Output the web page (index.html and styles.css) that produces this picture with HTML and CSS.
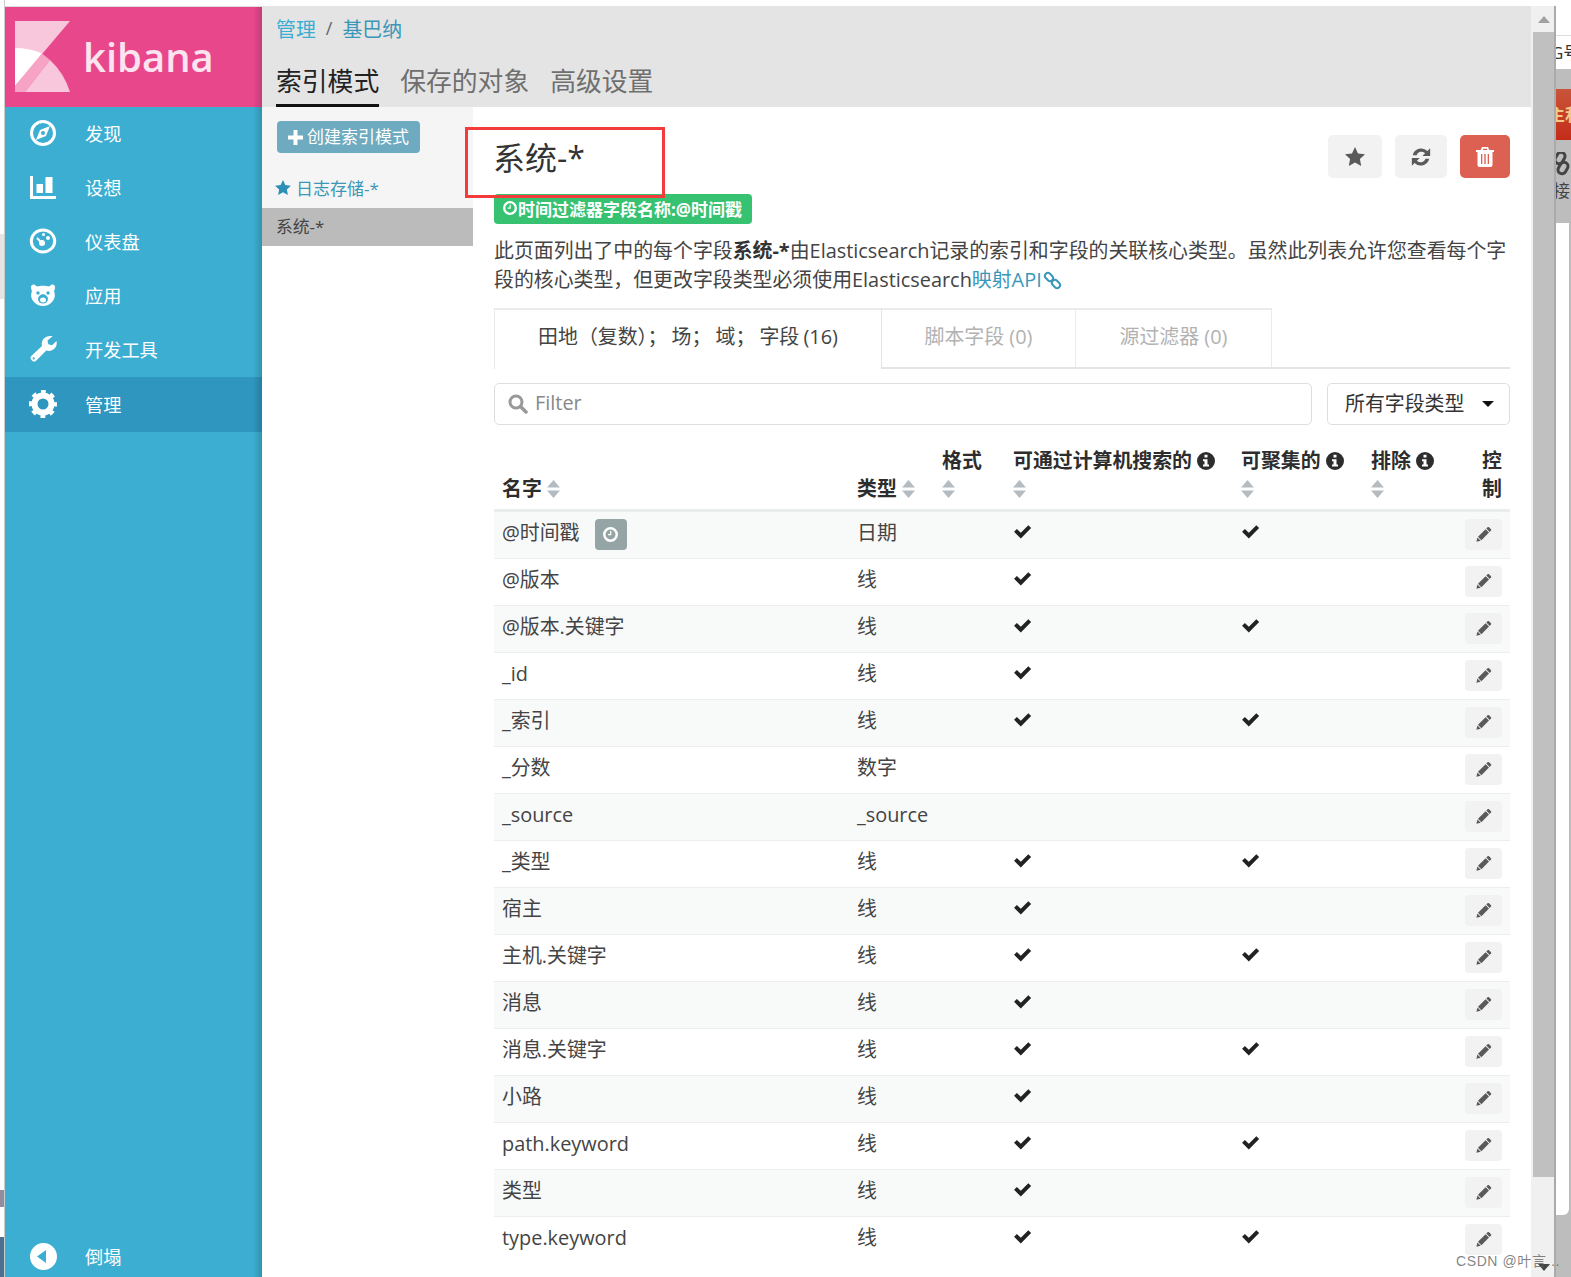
FILE: index.html
```html
<!DOCTYPE html>
<html lang="zh-CN">
<head>
<meta charset="utf-8">
<title>Kibana 管理</title>
<link rel="stylesheet" href="styles.css">
</head>
<body>
<svg class="defs" aria-hidden="true">
  <defs>
    <symbol id="i-check" viewBox="0 0 20 16"><path d="M1 8.2l3-3 4.2 4.2L16.2 1.2l3 3L8.2 15.4z"/></symbol>
    <symbol id="i-pencil" viewBox="0 0 16 16"><path d="M11.6 1.2c.4-.4 1-.4 1.4 0l2 2c.4.4.4 1 0 1.4l-1.3 1.3-3.4-3.4z"/><path d="M9.6 3.2l3.4 3.4-7.6 7.6-3.4-3.4z"/><path d="M1.4 11.5l3.3 3.3L.4 15.8z"/></symbol>
    <symbol id="i-sort" viewBox="0 0 13 18"><path d="M6.5 0L13 7.6H0z"/><path d="M0 10.4h13L6.5 18z"/></symbol>
    <symbol id="i-info" viewBox="0 0 18 18"><path fill-rule="evenodd" d="M9 0a9 9 0 1 1 0 18A9 9 0 0 1 9 0zM7.5 2.8v2.7h3V2.8zM6 7.2v2h1.5v3.2H6v2.1h6v-2.1h-1.5V7.2z"/></symbol>
    <symbol id="i-star" viewBox="0 0 20 19"><path d="M10 0l3 6.4 7 .9-5.1 4.8 1.3 6.9L10 15.6 3.800 19l1.300-6.900L0 7.300l7-.9z"/></symbol>
    <symbol id="i-clock" viewBox="0 0 18 18"><path fill-rule="evenodd" d="M9 0a9 9 0 1 1 0 18A9 9 0 0 1 9 0zm0 3a6 6 0 1 0 0 12A6 6 0 0 0 9 3zm1 1.800v5.200H6V8.500h2.500V4.800z"/></symbol>
  </defs>
</svg>
<div class="page">
  <div class="edge-left">
    <div class="el-a"></div><div class="el-b"></div><div class="el-a2"></div><div class="el-c"></div><div class="el-d"></div><div class="el-e"></div><div class="el-f"></div>
  </div>
  <div class="app">
    <aside class="sidebar">
      <div class="brand">
        <svg class="logo" viewBox="0 0 55 71">
          <path fill="#f9c7dc" d="M0 0H55L0 65Z"/>
          <path fill="#fff" d="M0 27Q15 27 27 32.500L0 65Z"/>
          <path fill="#f6a3c5" d="M0 65L27 32.500L35 39L10 71H0Z"/>
          <path fill="#f9c7dc" d="M10 71L35 39Q49 52 55 71Z"/>
        </svg>
        <span class="brand-name">kibana</span>
      </div>
      <nav class="nav">
        <a class="nav-item"><span class="nav-icon"><svg width="28" height="28" viewBox="0 0 28 28"><circle cx="14" cy="14" r="11.500" fill="none" stroke="#fff" stroke-width="3"/><path fill="#fff" fill-rule="evenodd" d="M21 7L17 17L7 21L11 11ZM14 12a2 2 0 1 0 0 4a2 2 0 0 0 0-4Z"/></svg></span>发现</a>
        <a class="nav-item"><span class="nav-icon"><svg width="26" height="23" viewBox="0 0 26 23"><path fill="#fff" d="M0 0h3v20h23v3H0z"/><rect fill="#fff" x="6.500" y="8" width="6.500" height="9"/><rect fill="#fff" x="15.500" y="1" width="7" height="16"/></svg></span>设想</a>
        <a class="nav-item"><span class="nav-icon"><svg width="28" height="26" viewBox="0 0 28 26"><ellipse cx="14" cy="13" rx="11.700" ry="11" fill="none" stroke="#fff" stroke-width="3"/><circle cx="19" cy="10" r="2" fill="#fff"/><circle cx="14.500" cy="6.500" r="1.500" fill="#fff"/><circle cx="13" cy="15" r="3" fill="#fff"/><path d="M8 10l4 4" stroke="#fff" stroke-width="2"/></svg></span>仪表盘</a>
        <a class="nav-item"><span class="nav-icon"><svg width="26" height="22" viewBox="0 0 26 22"><path fill="#fff" d="M1 3C1 1 3 0 5 1L7 2.500C10 1.500 16 1.500 19 2.500L21 1C23 0 25 1 25 3C25 5 24.500 6 24 7C25.500 11 25 15 22 18C19 21 16 22 13 22C10 22 7 21 4 18C1 15 .5 11 2 7C1.500 6 1 5 1 3Z"/><circle cx="8" cy="9" r="1.700" fill="#3caed2"/><circle cx="18" cy="9" r="1.700" fill="#3caed2"/><ellipse cx="13" cy="15" rx="5" ry="4.500" fill="#3caed2"/><ellipse cx="13" cy="16" rx="3" ry="2.500" fill="#fff"/><ellipse cx="13" cy="11.500" rx="2" ry="1.200" fill="#3caed2"/></svg></span>应用</a>
        <a class="nav-item"><span class="nav-icon"><svg width="28" height="28" viewBox="0 0 28 28"><path fill="#fff" fill-rule="evenodd" d="M2.500 25C1 23.500 1.300 22 2.500 20.800L13 11C12 7 14 3.500 17.500 1.800C19.500 .9 22 .7 23.500 1.300L18.500 5.500L19.300 9.300L23 10.300L27.500 6C28 8 27.800 10.500 26.400 12.500C24 15.500 20.800 16.500 17.300 15.500L6.800 26C5.500 27.200 3.900 26.500 2.500 25ZM4.700 22.300a1.100 1.100 0 1 0 0 2.200a1.100 1.100 0 0 0 0-2.200Z"/></svg></span>开发工具</a>
        <a class="nav-item is-active"><span class="nav-icon"><svg width="28" height="28" viewBox="0 0 28 28"><circle cx="14" cy="14" r="8.500" fill="none" stroke="#fff" stroke-width="6"/><circle cx="14" cy="14" r="11.500" fill="none" stroke="#fff" stroke-width="5" stroke-dasharray="4.500 4.531" stroke-dashoffset="2.250"/></svg></span>管理</a>
      </nav>
      <a class="nav-item collapse"><span class="nav-icon"><svg width="27" height="27" viewBox="0 0 27 27"><path fill="#fff" fill-rule="evenodd" d="M13.500 0a13.500 13.500 0 1 1 0 27a13.500 13.500 0 0 1 0-27ZM16 7L7 13.500L16 20Z"/></svg></span>倒塌</a>
    </aside>
    <main class="main">
      <header class="topbar">
        <div class="crumbs"><a class="crumb">管理</a><span class="crumb-sep">/</span><a class="crumb crumb-dark">基巴纳</a></div>
        <div class="top-tabs"><a class="top-tab is-current">索引模式</a><a class="top-tab">保存的对象</a><a class="top-tab">高级设置</a></div>
      </header>
      <div class="content">
        <aside class="panel">
          <div class="panel-top">
            <button class="create-btn"><svg class="plus" width="15" height="15" viewBox="0 0 15 15"><path fill="#fff" d="M5.500 0h4v5.500H15v4H9.500V15h-4V9.500H0v-4h5.500z"/></svg><span class="create-label">创建索引模式</span></button>
            <a class="pattern pattern-fav"><svg class="pattern-star" width="16" height="15"><use href="#i-star"/></svg>日志存储-*</a>
          </div>
          <a class="pattern pattern-current">系统-*</a>
        </aside>
        <section class="detail">
          <div class="detail-head">
            <h1 class="title">系统-*</h1>
            <div class="actions">
              <button class="act act-star"><svg width="20" height="19" class="ico-dark"><use href="#i-star"/></svg></button>
              <button class="act act-reload"><svg width="22" height="22" viewBox="0 0 24 24" class="ico-dark"><path d="M21 14a9.500 9.500 0 0 1-16 4.500L2 21.500V13h8.500L7.500 16a5.500 5.500 0 0 0 9.300-2z"/><path d="M3 10a9.500 9.500 0 0 1 16-4.500L22 2.500V11h-8.500l3-3a5.500 5.500 0 0 0-9.300 2z"/></svg></button>
              <button class="act act-trash"><svg width="18" height="20" viewBox="0 0 18 20"><path fill="#fff" fill-rule="evenodd" d="M6 0h6l1.300 3H18v2h-1.500v13a2 2 0 0 1-2 2h-11a2 2 0 0 1-2-2V5H0V3h4.700zM7.200 1.700L6.700 3h4.600l-.5-1.300zM5 7v10h1.300V7zm3.300 0v10h1.400V7zM11.700 7v10H13V7z"/></svg></button>
            </div>
          </div>
          <div class="time-badge"><svg width="14" height="14" class="ico-white"><use href="#i-clock"/></svg>时间过滤器字段名称:@时间戳</div>
          <p class="intro">此页面列出了中的每个字段<b>系统-*</b>由Elasticsearch记录的索引和字段的关联核心类型。虽然此列表允许您查看每个字段的核心类型，但更改字段类型必须使用Elasticsearch<a class="doc-link">映射API<svg class="chain" width="19" height="19" viewBox="0 0 19 19"><g fill="none" stroke="#3a97b8" stroke-width="2"><rect x="1.500" y="3" width="9" height="6" rx="3" transform="rotate(45 6 6)"/><rect x="8.500" y="10" width="9" height="6" rx="3" transform="rotate(45 13 13)"/></g></svg></a></p>
          <div class="tabs">
            <a class="tab tab-fields">田地（复数）； 场； 域； 字段 (16)</a>
            <a class="tab tab-script">脚本字段 (0)</a>
            <a class="tab tab-source">源过滤器 (0)</a>
          </div>
          <div class="filters">
            <label class="filter"><svg width="20" height="20" viewBox="0 0 20 20"><circle cx="8" cy="8" r="6" fill="none" stroke="#999" stroke-width="3"/><path d="M12.500 12.500L18 18" stroke="#999" stroke-width="3.500" stroke-linecap="round"/></svg><span class="filter-text">Filter</span></label>
            <div class="type-select"><span class="type-label">所有字段类型</span><span class="caret"></span></div>
          </div>
          <table class="fields">
            <colgroup><col class="c-name"><col class="c-type"><col class="c-format"><col class="c-search"><col class="c-agg"><col class="c-excl"><col class="c-ctrl"></colgroup>
            <thead>
              <tr>
                <th>名字 <svg class="sort" width="13" height="18"><use href="#i-sort"/></svg></th>
                <th>类型 <svg class="sort" width="13" height="18"><use href="#i-sort"/></svg></th>
                <th>格式 <svg class="sort" width="13" height="18"><use href="#i-sort"/></svg></th>
                <th>可通过计算机搜索的 <svg class="info" width="18" height="18"><use href="#i-info"/></svg> <svg class="sort" width="13" height="18"><use href="#i-sort"/></svg></th>
                <th>可聚集的 <svg class="info" width="18" height="18"><use href="#i-info"/></svg> <svg class="sort" width="13" height="18"><use href="#i-sort"/></svg></th>
                <th>排除 <svg class="info" width="18" height="18"><use href="#i-info"/></svg> <svg class="sort" width="13" height="18"><use href="#i-sort"/></svg></th>
                <th class="th-ctrl">控制</th>
              </tr>
            </thead>
            <tbody>
              <tr><td>@时间戳<span class="time-tag"><svg width="15" height="15" class="ico-white"><use href="#i-clock"/></svg></span></td><td>日期</td><td></td><td><svg class="ok"><use href="#i-check"/></svg></td><td><svg class="ok"><use href="#i-check"/></svg></td><td></td><td class="td-ctrl"><button class="edit"><svg width="16" height="16" class="ico-dark"><use href="#i-pencil"/></svg></button></td></tr>
              <tr><td>@版本</td><td>线</td><td></td><td><svg class="ok"><use href="#i-check"/></svg></td><td></td><td></td><td class="td-ctrl"><button class="edit"><svg width="16" height="16" class="ico-dark"><use href="#i-pencil"/></svg></button></td></tr>
              <tr><td>@版本.关键字</td><td>线</td><td></td><td><svg class="ok"><use href="#i-check"/></svg></td><td><svg class="ok"><use href="#i-check"/></svg></td><td></td><td class="td-ctrl"><button class="edit"><svg width="16" height="16" class="ico-dark"><use href="#i-pencil"/></svg></button></td></tr>
              <tr><td>_id</td><td>线</td><td></td><td><svg class="ok"><use href="#i-check"/></svg></td><td></td><td></td><td class="td-ctrl"><button class="edit"><svg width="16" height="16" class="ico-dark"><use href="#i-pencil"/></svg></button></td></tr>
              <tr><td>_索引</td><td>线</td><td></td><td><svg class="ok"><use href="#i-check"/></svg></td><td><svg class="ok"><use href="#i-check"/></svg></td><td></td><td class="td-ctrl"><button class="edit"><svg width="16" height="16" class="ico-dark"><use href="#i-pencil"/></svg></button></td></tr>
              <tr><td>_分数</td><td>数字</td><td></td><td></td><td></td><td></td><td class="td-ctrl"><button class="edit"><svg width="16" height="16" class="ico-dark"><use href="#i-pencil"/></svg></button></td></tr>
              <tr><td>_source</td><td>_source</td><td></td><td></td><td></td><td></td><td class="td-ctrl"><button class="edit"><svg width="16" height="16" class="ico-dark"><use href="#i-pencil"/></svg></button></td></tr>
              <tr><td>_类型</td><td>线</td><td></td><td><svg class="ok"><use href="#i-check"/></svg></td><td><svg class="ok"><use href="#i-check"/></svg></td><td></td><td class="td-ctrl"><button class="edit"><svg width="16" height="16" class="ico-dark"><use href="#i-pencil"/></svg></button></td></tr>
              <tr><td>宿主</td><td>线</td><td></td><td><svg class="ok"><use href="#i-check"/></svg></td><td></td><td></td><td class="td-ctrl"><button class="edit"><svg width="16" height="16" class="ico-dark"><use href="#i-pencil"/></svg></button></td></tr>
              <tr><td>主机.关键字</td><td>线</td><td></td><td><svg class="ok"><use href="#i-check"/></svg></td><td><svg class="ok"><use href="#i-check"/></svg></td><td></td><td class="td-ctrl"><button class="edit"><svg width="16" height="16" class="ico-dark"><use href="#i-pencil"/></svg></button></td></tr>
              <tr><td>消息</td><td>线</td><td></td><td><svg class="ok"><use href="#i-check"/></svg></td><td></td><td></td><td class="td-ctrl"><button class="edit"><svg width="16" height="16" class="ico-dark"><use href="#i-pencil"/></svg></button></td></tr>
              <tr><td>消息.关键字</td><td>线</td><td></td><td><svg class="ok"><use href="#i-check"/></svg></td><td><svg class="ok"><use href="#i-check"/></svg></td><td></td><td class="td-ctrl"><button class="edit"><svg width="16" height="16" class="ico-dark"><use href="#i-pencil"/></svg></button></td></tr>
              <tr><td>小路</td><td>线</td><td></td><td><svg class="ok"><use href="#i-check"/></svg></td><td></td><td></td><td class="td-ctrl"><button class="edit"><svg width="16" height="16" class="ico-dark"><use href="#i-pencil"/></svg></button></td></tr>
              <tr><td>path.keyword</td><td>线</td><td></td><td><svg class="ok"><use href="#i-check"/></svg></td><td><svg class="ok"><use href="#i-check"/></svg></td><td></td><td class="td-ctrl"><button class="edit"><svg width="16" height="16" class="ico-dark"><use href="#i-pencil"/></svg></button></td></tr>
              <tr><td>类型</td><td>线</td><td></td><td><svg class="ok"><use href="#i-check"/></svg></td><td></td><td></td><td class="td-ctrl"><button class="edit"><svg width="16" height="16" class="ico-dark"><use href="#i-pencil"/></svg></button></td></tr>
              <tr><td>type.keyword</td><td>线</td><td></td><td><svg class="ok"><use href="#i-check"/></svg></td><td><svg class="ok"><use href="#i-check"/></svg></td><td></td><td class="td-ctrl"><button class="edit"><svg width="16" height="16" class="ico-dark"><use href="#i-pencil"/></svg></button></td></tr>
            </tbody>
          </table>
        </section>
      </div>
    </main>
  </div>
  <div class="scrollbar">
    <span class="arrow-up"></span>
    <div class="thumb"></div>
    <span class="arrow-down"></span>
  </div>
  <div class="edge-right">
    <div class="er-top"></div>
    <div class="er-text">G号</div>
    <div class="er-gap"></div>
    <div class="er-red">主利</div>
    <div class="er-gray"><svg width="18" height="24" viewBox="0 0 18 24"><g fill="none" stroke="#444" stroke-width="3"><rect x="1" y="2" width="12" height="8" rx="4" transform="rotate(-60 7 6)"/><rect x="4" y="12" width="12" height="8" rx="4" transform="rotate(-60 10 16)"/></g></svg><span>接</span></div>
    <div class="er-panel"></div>
    <div class="er-bottom"></div>
  </div>
  <div class="red-box"></div>
  <div class="watermark">CSDN @叶言...</div>
</div>
</body>
</html>
```
FILE: styles.css
```css
* { box-sizing: border-box; }
html, body { margin: 0; padding: 0; background: #fff; }
body {
  font-family: "Open Sans", "Noto Sans CJK SC", sans-serif;
  font-size: 19.9px;
  color: #444;
  width: 1571px;
  height: 1277px;
  overflow: hidden;
}
a { text-decoration: none; }
button { font: inherit; border: 0; padding: 0; cursor: pointer; }
.defs { position: absolute; width: 0; height: 0; }
.page { position: relative; display: flex; width: 1571px; height: 1277px; overflow: hidden; }

/* edges of neighbouring windows */
.edge-left { width: 5px; flex: none; display: flex; flex-direction: column; border-right: 1px solid #ccc; background: #fff; }
.el-a { height: 234px; flex: none; }
.el-b { height: 65px; flex: none; background: #e4e4e4; }
.el-a2 { height: 640px; flex: none; }
.el-c { height: 251px; flex: none; }
.el-d { height: 17px; flex: none; background: #8e8ea0; }
.el-e { height: 30px; flex: none; background: #fff; }
.el-f { flex: 1; background: #4a6f8f; }

.app { width: 1526px; flex: none; display: flex; margin-top: 6px; border-top: 1px solid #ddd; height: 1271px; }

/* sidebar */
.sidebar { position: relative; width: 257px; flex: none; background: #3caed2; display: flex; flex-direction: column; }
.sidebar::after { content: ""; position: absolute; top: 0; right: 0; bottom: 0; width: 9px; background: linear-gradient(to right, rgba(0,0,0,0), rgba(0,0,0,.16)); pointer-events: none; }
.brand { height: 100px; flex: none; background: #e8488b; display: flex; align-items: flex-start; padding: 14px 0 0 10px; }
.logo { width: 55px; height: 71px; flex: none; }
.brand-name { margin: 7px 0 0 13px; font-family: "Open Sans", sans-serif; font-size: 40px; font-weight: 600; line-height: 58px; color: #fbe3ef; }
.nav { flex: 1; display: flex; flex-direction: column; }
.nav-item { height: 54px; flex: none; display: flex; align-items: center; color: #fff; font-size: 18.2px; padding-bottom: 2px; }
.nav-item.is-active { background: #2e96bf; height: 55px; }
.nav-icon { width: 80px; flex: none; display: flex; justify-content: center; padding-right: 4px; }
.collapse { height: 40px; padding-bottom: 2px; }

/* main */
.main { flex: 1; min-width: 0; display: flex; flex-direction: column; }
.topbar { height: 101px; flex: none; background: #e4e4e4; padding: 6px 0 0 14px; margin-top: -1px; }
.crumbs { display: flex; align-items: center; height: 32px; }
.crumb { color: #3caed2; }
.crumb-dark { color: #3a97b8; }
.crumb-sep { margin: 0 10px; color: #666; font-size: 18px; }
.top-tabs { display: flex; gap: 21px; margin-top: 9px; height: 54px; }
.top-tab { font-size: 25.8px; line-height: 52px; padding-top: 2px; color: #6f6f6f; height: 54px; }
.top-tab.is-current { color: #222; border-bottom: 3px solid #111; }

.content { flex: 1; display: flex; min-height: 0; }
.panel { width: 211px; flex: none; }
.panel-top { height: 101px; background: #f5f5f5; padding: 15px 0 0 15px; }
.create-btn { display: flex; align-items: center; gap: 4px; width: 143px; height: 32px; padding-left: 11px; border-radius: 4px; background: #6eabc0; color: #fff; font-size: 17px; white-space: nowrap; margin-top: -1px; }
.create-label { margin-top: -3px; }
.pattern { display: flex; align-items: center; font-size: 16.8px; }
.pattern-fav { color: #3a97b8; margin-top: 21px; height: 26px; margin-left: -2px; font-size: 17px; }
.pattern-star { fill: #2d8fb5; margin-right: 5px; }
.pattern-current { height: 38px; background: #bbb; color: #444; padding: 0 0 2px 14px; }

.detail { flex: 1; min-width: 0; padding: 0 21px; }
.detail-head { height: 87px; padding-top: 28px; display: flex; justify-content: space-between; align-items: flex-start; }
.title { margin: 0 0 0 -1px; font-size: 32px; font-weight: 400; line-height: 46px; color: #333; }
.actions { display: flex; gap: 13px; }
.act { width: 54px; height: 43px; border-radius: 5px; background: #f2f2f2; display: flex; align-items: center; justify-content: center; }
.act-star { margin-left: -1px; }
.act-reload { width: 52px; }
.act-trash { width: 50px; background: #dd6153; }
.ico-dark { fill: #5a5a5a; }
.ico-white { fill: #fff; }
.time-badge { display: flex; align-items: center; gap: 1px; height: 30px; width: 258px; padding: 0 0 2px 9px; border-radius: 4px; background: #36c270; color: #fff; font-size: 17px; font-weight: 700; white-space: nowrap; }
.intro { margin: 12px 0 0; line-height: 29.4px; }
.intro b { color: #333; }
.doc-link { color: #3a97b8; }
.chain { vertical-align: -3px; margin-left: 1px; }

.tabs { display: flex; margin-top: 13px; height: 61px; border-bottom: 2px solid #e4e4e4; }
.tab { height: 59px; display: flex; align-items: center; justify-content: center; padding-bottom: 5px; border: 2px solid #ebebeb; border-left-width: 1px; border-bottom: 0; color: #b2b2b2; white-space: nowrap; }
.tab-fields { width: 388px; height: 61px; padding-bottom: 7px; background: #fff; color: #444; border-right: 1px solid #e4e4e4; word-spacing: -1px; }
.tab-script { width: 194px; border-left: 0; border-right-width: 1px; }
.tab-source { width: 196px; border-left: 0; border-right-width: 1px; }

.filters { display: flex; gap: 15px; margin-top: 14px; }
.filter { flex: 1; height: 42px; display: flex; align-items: center; gap: 7px; padding-left: 13px; border: 1px solid #dcdfe0; border-radius: 5px; }
.filter-text { color: #888; margin-top: -2px; }
.type-select { width: 183px; height: 42px; display: flex; align-items: center; justify-content: space-between; padding: 0 15px 0 17px; border: 1px solid #dcdfe0; border-radius: 5px; color: #333; }
.type-label { margin-top: -3px; }
.caret { width: 0; height: 0; border-left: 6px solid transparent; border-right: 6px solid transparent; border-top: 6px solid #111; }

.fields { width: 1016px; table-layout: fixed; border-collapse: separate; border-spacing: 0; margin-top: 16px; }
.c-name { width: 355px; }
.c-type { width: 85px; }
.c-format { width: 71px; }
.c-search { width: 228px; }
.c-agg { width: 130px; }
.c-excl { width: 94px; }
.c-ctrl { width: 53px; }
th { padding: 6px 8px; line-height: 28px; text-align: left; vertical-align: bottom; font-weight: 700; color: #2d2d2d; border-bottom: 3px solid #e9eded; }
.th-ctrl { text-align: right; }
.sort { fill: #b4bcc2; vertical-align: -2px; }
.info { fill: #2d2d2d; vertical-align: -2px; }
td { height: 47px; padding: 7px 8px 0; line-height: 28px; vertical-align: top; border-bottom: 1px solid #eee; color: #444; white-space: nowrap; }
tbody tr:nth-child(odd) td { background: #f8f9f9; }
tbody tr:last-child td { border-bottom: 0; }
.ok { width: 19px; height: 15px; fill: #222; vertical-align: 1px; }
.time-tag { display: inline-flex; align-items: center; justify-content: center; width: 32px; height: 31px; margin-left: 15px; border-radius: 4px; background: #95a5a6; vertical-align: top; }
.td-ctrl { padding: 7px 8px 0 0; text-align: right; }
.edit { display: inline-flex; align-items: center; justify-content: center; width: 37px; height: 31px; border-radius: 4px; background: #f2f2f2; vertical-align: top; }

/* scrollbar */
.scrollbar { width: 25px; flex: none; margin-top: 6px; background: #f0f0f0; border-right: 2px solid #aaa; padding: 0 0 0 2px; display: flex; flex-direction: column; align-items: stretch; position: relative; height: 1271px; }
.arrow-up { display: block; width: 0; height: 0; margin: 10px 0 9px 5px; border-left: 6px solid transparent; border-right: 6px solid transparent; border-bottom: 7px solid #a0a0a0; }
.thumb { height: 1145px; width: 21px; background: #c0c0c0; flex: none; }
.arrow-down { display: block; width: 0; height: 0; margin: 87px 0 0 5px; border-left: 6px solid transparent; border-right: 6px solid transparent; border-top: 7px solid #444; }

/* neighbouring window at the right */
.edge-right { width: 15px; flex: none; display: flex; flex-direction: column; overflow: hidden; background: #bdbdbd; }
.er-top { height: 36px; background: #fff; border-bottom: 1px solid #ddd; flex: none; }
.er-text { height: 33px; background: #fff; flex: none; font-size: 17px; line-height: 33px; margin-left: -5px; color: #333; white-space: nowrap; }
.er-gap { height: 20px; flex: none; }
.er-red { height: 51px; background: linear-gradient(#c8553a, #c42c18); flex: none; color: #f2c98c; font-size: 17px; line-height: 51px; font-weight: 700; white-space: nowrap; margin-left: -8px; }
.er-gray { height: 83px; flex: none; padding-top: 12px; font-size: 17px; color: #444; margin-left: -3px; }
.er-gray span { display: block; line-height: 20px; }
.er-panel { height: 992px; background: #fff; border-radius: 0 0 6px 0; margin-right: 2px; flex: none; }
.er-bottom { flex: 1; }

/* overlays */
.red-box { position: absolute; left: 465px; top: 127px; width: 200px; height: 71px; border: 3px solid #f33b3b; }
.watermark { position: absolute; left: 1456px; top: 1252px; font-family: "Liberation Sans", "Noto Sans CJK SC", sans-serif; font-size: 14px; letter-spacing: .6px; line-height: 18px; color: rgba(90,90,90,.75); white-space: nowrap; }
```
